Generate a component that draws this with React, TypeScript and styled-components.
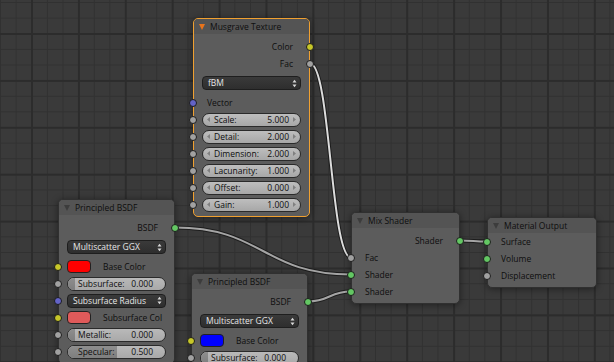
import React from 'react';
import styled, { createGlobalStyle } from 'styled-components';

const GlobalStyle = createGlobalStyle`
  html, body { margin: 0; padding: 0; background: #3a3a3a; }
  body { font-family: "Open Sans", "DejaVu Sans", sans-serif; }
`;

const Canvas = styled.div`
  position: relative;
  width: 614px;
  height: 362px;
  overflow: hidden;
  background-color: #3a3a3a;
  background-image:
    linear-gradient(to right, #2c2c2c 2px, transparent 2px),
    linear-gradient(to bottom, #2c2c2c 2px, transparent 2px),
    linear-gradient(to right, #313131 1px, transparent 1px),
    linear-gradient(to bottom, #313131 1px, transparent 1px);
  background-size: 46.92px 46.92px, 46.92px 46.92px, 15.64px 15.64px, 15.64px 15.64px;
  background-position: 31px 0, 0 33px, 0 0, 0 2px;
`;

const WireLayer = styled.svg`
  position: absolute;
  left: 0;
  top: 0;
  width: 614px;
  height: 362px;
`;

const NodeBox = styled.div<{ $x: number; $y: number; $w: number; $selected?: boolean }>`
  position: absolute;
  left: ${p => p.$x}px;
  top: ${p => p.$y}px;
  width: ${p => p.$w}px;
  box-sizing: border-box;
  background: #5c5c5c;
  border-radius: 5px;
  border: 1px solid ${p => (p.$selected ? '#f0a030' : '#303030')};
  box-shadow: 0 1px 7px rgba(0, 0, 0, 0.45);
  font-size: 8.5px;
  line-height: 12px;
  color: #0e0e0e;
`;

const Header = styled.div`
  height: 15px;
  display: flex;
  align-items: center;
  gap: 5px;
  padding-left: 5px;
  background: #545454;
  border-radius: 4px 4px 0 0;
  white-space: nowrap;
`;

const Triangle = styled.span<{ $color: string }>`
  width: 0;
  height: 0;
  border-left: 3.5px solid transparent;
  border-right: 3.5px solid transparent;
  border-top: 6px solid ${p => p.$color};
`;

const Body = styled.div<{ $top: number }>`
  padding: ${p => p.$top}px 0 3px 0;
`;

const Row = styled.div<{ $h?: number }>`
  position: relative;
  height: ${p => p.$h ?? 17}px;
  display: flex;
  align-items: center;
  padding: 0 8px;
  white-space: nowrap;
`;

const OutLabel = styled.span`
  margin-left: auto;
  padding-right: 8px;
`;

const InLabel = styled.span`
  margin-left: 5px;
`;

const Socket = styled.span<{ $color: string; $side: 'left' | 'right' }>`
  position: absolute;
  top: 50%;
  ${p => p.$side}: -5px;
  width: 8px;
  height: 8px;
  margin-top: -4px;
  box-sizing: border-box;
  border-radius: 50%;
  border: 1px solid #1c1c1c;
  background: ${p => p.$color};
`;

const Dropdown = styled.div`
  flex: 1;
  height: 14px;
  box-sizing: border-box;
  border-radius: 4px;
  background: linear-gradient(#3a3a3a, #2e2e2e);
  border: 1px solid #1e1e1e;
  color: #e6e6e6;
  display: flex;
  align-items: center;
  padding: 0 3px 0 5px;
`;

const DropText = styled.span`
  flex: 1;
`;

const NumSlider = styled.div`
  flex: 1;
  height: 14px;
  box-sizing: border-box;
  border-radius: 7px;
  background: linear-gradient(#bebebe, #a7a7a7);
  border: 1px solid #2a2a2a;
  display: flex;
  align-items: center;
  padding: 0 4px;
  gap: 4px;
`;

const SliderLabel = styled.span`
  flex: 1;
`;

const FactorTrack = styled.div`
  position: relative;
  flex: 1;
  height: 14px;
  box-sizing: border-box;
  border-radius: 7px;
  background: linear-gradient(#b9b9b9, #a9a9a9);
  border: 1px solid #2a2a2a;
  overflow: hidden;
`;

const FactorFill = styled.div`
  position: absolute;
  left: 0;
  top: 0;
  bottom: 0;
  background: linear-gradient(#8e8e8e, #7e7e7e);
`;

const FactorText = styled.div`
  position: relative;
  height: 100%;
  display: flex;
  align-items: center;
  padding: 0 12px 0 10px;
`;

const Swatch = styled.span<{ $color: string }>`
  width: 24px;
  height: 13px;
  box-sizing: border-box;
  border-radius: 4px;
  border: 1px solid #222;
  background: ${p => p.$color};
  flex: none;
`;

const SwatchLabel = styled.span`
  margin-left: 12px;
`;

const C = {
  yellow: '#c7c729',
  grey: '#a1a1a1',
  blue: '#6363c7',
  green: '#63c763',
};

const UpDown = () => (
  <svg width="5" height="9" viewBox="0 0 5 9">
    <path d="M0.5 3.5 L2.5 0.8 L4.5 3.5 Z" fill="#d8d8d8" />
    <path d="M0.5 5.5 L2.5 8.2 L4.5 5.5 Z" fill="#d8d8d8" />
  </svg>
);

const Arrow = ({ dir }: { dir: 'l' | 'r' }) => (
  <svg width="3" height="5" viewBox="0 0 3 5">
    <path d={dir === 'l' ? 'M3 0 L0 2.5 L3 5 Z' : 'M0 0 L3 2.5 L0 5 Z'} fill="#808080" />
  </svg>
);

const Node = ({
  x, y, w, title, selected, top = 4, children,
}: {
  x: number; y: number; w: number; title: string; selected?: boolean; top?: number; children: React.ReactNode;
}) => (
  <NodeBox $x={x} $y={y} $w={w} $selected={selected}>
    <Header>
      <Triangle $color={selected ? '#e8741c' : '#3c3c3c'} />
      <span>{title}</span>
    </Header>
    <Body $top={top}>{children}</Body>
  </NodeBox>
);

const Out = ({ label, color }: { label: string; color: string }) => (
  <Row>
    <OutLabel>{label}</OutLabel>
    <Socket $side="right" $color={color} />
  </Row>
);

const In = ({ label, color }: { label: string; color: string }) => (
  <Row>
    <Socket $side="left" $color={color} />
    <InLabel>{label}</InLabel>
  </Row>
);

const Num = ({ label, value }: { label: string; value: string }) => (
  <Row>
    <Socket $side="left" $color={C.grey} />
    <NumSlider>
      <Arrow dir="l" />
      <SliderLabel>{label}</SliderLabel>
      <span>{value}</span>
      <Arrow dir="r" />
    </NumSlider>
  </Row>
);

const Factor = ({ label, value }: { label: string; value: number }) => (
  <Row>
    <Socket $side="left" $color={C.grey} />
    <FactorTrack>
      <FactorFill style={{ width: `max(${value * 100}%, 7px)` }} />
      <FactorText>
        <SliderLabel>{label}</SliderLabel>
        <span>{value.toFixed(3)}</span>
      </FactorText>
    </FactorTrack>
  </Row>
);

const Menu = ({ label, socket, h }: { label: string; socket?: string; h?: number }) => (
  <Row $h={h}>
    {socket && <Socket $side="left" $color={socket} />}
    <Dropdown>
      <DropText>{label}</DropText>
      <UpDown />
    </Dropdown>
  </Row>
);

const ColorIn = ({ label, color }: { label: string; color: string }) => (
  <Row>
    <Socket $side="left" $color={C.yellow} />
    <Swatch $color={color} />
    <SwatchLabel>{label}</SwatchLabel>
  </Row>
);

const Wire = ({ a, b, hl }: { a: [number, number]; b: [number, number]; hl?: boolean }) => {
  const dx = Math.abs(b[0] - a[0]) * 0.5;
  const d = `M${a[0]} ${a[1]} C${a[0] + dx} ${a[1]} ${b[0] - dx} ${b[1]} ${b[0]} ${b[1]}`;
  return (
    <g fill="none">
      <path d={d} stroke="#1c1c1c" strokeWidth={4} />
      <path d={d} stroke={hl ? '#dcdcdc' : '#a4a4a4'} strokeWidth={2} />
    </g>
  );
};

const Principled = ({ x, y, base, full }: { x: number; y: number; base: string; full?: boolean }) => (
  <Node x={x} y={y} w={117} title="Principled BSDF">
    <Out label="BSDF" color={C.green} />
    <Menu label="Multiscatter GGX" h={22} />
    <ColorIn label="Base Color" color={base} />
    <Factor label="Subsurface:" value={0} />
    {full && (
      <>
        <Menu label="Subsurface Radius" socket={C.blue} />
        <ColorIn label="Subsurface Col" color="#e05a5a" />
        <Factor label="Metallic:" value={0} />
        <Factor label="Specular:" value={0.5} />
      </>
    )}
  </Node>
);

export default function App() {
  return (
    <>
      <GlobalStyle />
      <Canvas>
        <WireLayer viewBox="0 0 614 362">
          <Wire a={[310, 63.5]} b={[351, 257.5]} hl />
          <Wire a={[175, 227.5]} b={[351, 274.5]} />
          <Wire a={[308, 301.5]} b={[351, 291.5]} />
          <Wire a={[460, 240.5]} b={[487, 241.5]} />
        </WireLayer>

        <Node x={193} y={18} w={117} title="Musgrave Texture" selected>
          <Out label="Color" color={C.yellow} />
          <Out label="Fac" color={C.grey} />
          <Menu label="fBM" h={22} />
          <In label="Vector" color={C.blue} />
          <Num label="Scale:" value="5.000" />
          <Num label="Detail:" value="2.000" />
          <Num label="Dimension:" value="2.000" />
          <Num label="Lacunarity:" value="1.000" />
          <Num label="Offset:" value="0.000" />
          <Num label="Gain:" value="1.000" />
        </Node>

        <Principled x={58} y={199} base="#ff0000" full />
        <Principled x={191} y={273} base="#0000ff" />

        <Node x={351} y={212} w={109} title="Mix Shader">
          <Out label="Shader" color={C.green} />
          <In label="Fac" color={C.grey} />
          <In label="Shader" color={C.green} />
          <In label="Shader" color={C.green} />
        </Node>

        <Node x={487} y={217} w={110} title="Material Output" top={0}>
          <In label="Surface" color={C.green} />
          <In label="Volume" color={C.green} />
          <In label="Displacement" color={C.grey} />
        </Node>
      </Canvas>
    </>
  );
}
